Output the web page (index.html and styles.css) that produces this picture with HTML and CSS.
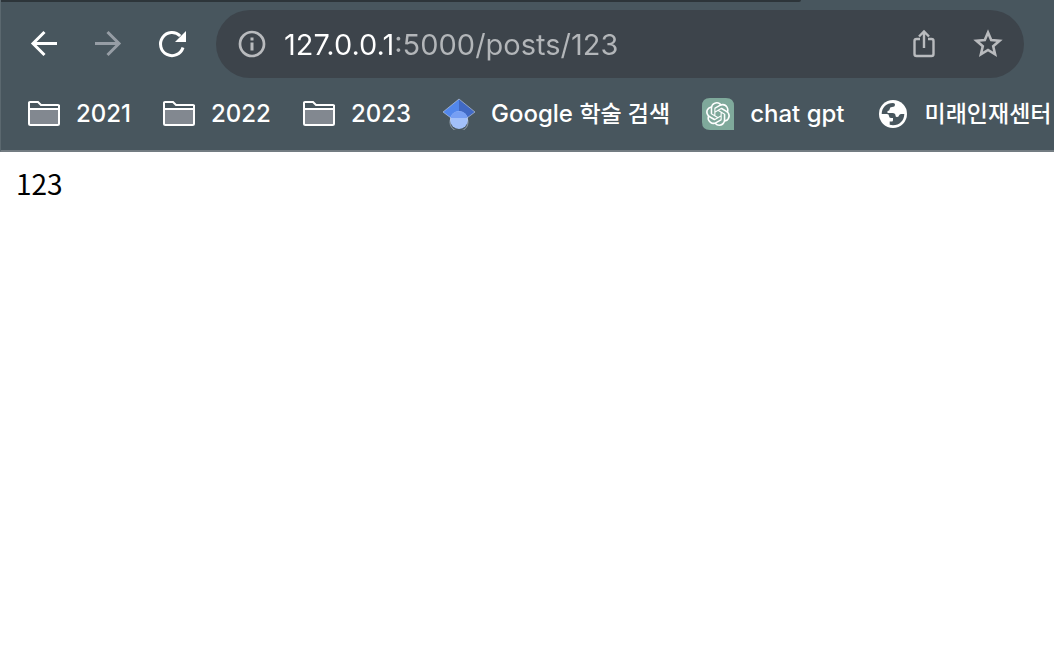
FILE: index.html
```
<!DOCTYPE html>
<html lang="ko">
  <head>
    <meta charset="UTF-8" />
    <meta name="viewport" content="width=device-width, initial-scale=1.0" />
    <title>127.0.0.1:5000/posts/123</title>
    <link rel="stylesheet" href="styles.css">
  </head>
  <body>
    <header class="browser">
      <div class="tab-strip"></div>
      <div class="toolbar">
        <button type="button" class="nav-btn" aria-label="Back">
          <svg width="32" height="32" viewBox="0 0 32 32" fill="none" stroke="#fff" stroke-width="3">
            <path d="M29 15.500H5M16.500 4L5 15.500L16.500 27" />
          </svg>
        </button>
        <button type="button" class="nav-btn" aria-label="Forward" disabled>
          <svg width="32" height="32" viewBox="0 0 32 32" fill="none" stroke="#969da5" stroke-width="3">
            <path d="M3 15.500H27M15.500 4L27 15.500L15.500 27" />
          </svg>
        </button>
        <button type="button" class="nav-btn" aria-label="Reload">
          <svg width="32" height="32" viewBox="0 0 32 32">
            <path d="M27 19.500A11.500 11.500 0 1 1 24.200 8" fill="none" stroke="#fff" stroke-width="3" />
            <path d="M30 3V14H19Z" fill="#fff" />
          </svg>
        </button>
        <form class="address-bar">
          <button type="button" class="address-btn" aria-label="Site information">
            <svg width="28" height="28" viewBox="0 0 28 28">
              <circle cx="14" cy="14" r="12" fill="none" stroke="#b9bbbe" stroke-width="2.700" />
              <path d="M12.500 7.500h3v3h-3zM12.500 12.500h3v8h-3z" fill="#b9bbbe" />
            </svg>
          </button>
          <input type="text" class="address" aria-label="Address" value="127.0.0.1:5000/posts/123" spellcheck="false" />
          <button type="button" class="address-btn share" aria-label="Share">
            <svg width="32" height="32" viewBox="0 0 32 32" fill="none" stroke="#b9bbbe" stroke-width="2.400">
              <path d="M12 11H8.500Q6.500 11 6.500 13V26Q6.500 28 8.500 28H23.500Q25.500 28 25.500 26V13Q25.500 11 23.500 11H20" />
              <path d="M16 20V4M11 8.500L16 3.500L21 8.500" />
            </svg>
          </button>
          <button type="button" class="address-btn" aria-label="Bookmark this page">
            <svg width="32" height="32" viewBox="0 0 32 32" fill="none" stroke="#b9bbbe" stroke-width="2.600">
              <path d="M16 4.500L19.200 12.100L27.500 12.800L21.200 18.200L23.100 26.300L16 22L8.900 26.300L10.800 18.200L4.500 12.800L12.800 12.100Z" />
            </svg>
          </button>
        </form>
      </div>
      <nav class="bookmarks">
        <a class="bookmark" href="#">
          <svg width="32" height="32" viewBox="0 0 32 32" stroke="#fff" stroke-width="2">
            <path d="M1 8V25.500Q1 27 2.500 27H29.500Q31 27 31 25.500V8Z" fill="#828890" />
            <path d="M1 11V4.500Q1 4 2 4H10L13 7H30Q31 7 31 8V11Z" fill="#48565e" />
          </svg>
          2021
        </a>
        <a class="bookmark" href="#">
          <svg width="32" height="32" viewBox="0 0 32 32" stroke="#fff" stroke-width="2">
            <path d="M1 8V25.500Q1 27 2.500 27H29.500Q31 27 31 25.500V8Z" fill="#828890" />
            <path d="M1 11V4.500Q1 4 2 4H10L13 7H30Q31 7 31 8V11Z" fill="#48565e" />
          </svg>
          2022
        </a>
        <a class="bookmark" href="#">
          <svg width="32" height="32" viewBox="0 0 32 32" stroke="#fff" stroke-width="2">
            <path d="M1 8V25.500Q1 27 2.500 27H29.500Q31 27 31 25.500V8Z" fill="#828890" />
            <path d="M1 11V4.500Q1 4 2 4H10L13 7H30Q31 7 31 8V11Z" fill="#48565e" />
          </svg>
          2023
        </a>
        <a class="bookmark" href="#">
          <svg width="32" height="32" viewBox="0 0 32 32">
            <path d="M16 1L0 14L8 20L16 14Z" fill="#5287ec" />
            <path d="M16 1L32 14L24 20L16 14Z" fill="#4169c4" />
            <circle cx="16" cy="22" r="9" fill="#a2c0fa" />
            <path d="M7.300 20A9 9 0 0 1 24.700 20Z" fill="#779ff3" />
            <path d="M8 20L0 14L16 1L32 14L24 20A9 9 0 1 1 8 20" fill="none" stroke="#c8d2e2" stroke-width="0.600" />
          </svg>
          <span>Google <span class="hangul">학술 검색</span></span>
        </a>
        <a class="bookmark" href="#">
          <svg width="32" height="32" viewBox="0 0 32 32">
            <path d="M8 0H24Q32 0 32 8V32H8Q0 32 0 24V8Q0 0 8 0Z" fill="#7fa99b" />
            <g transform="translate(4 4)" fill="#fff">
              <path d="M22.282 9.821a5.985 5.985 0 0 0-.516-4.910 6.046 6.046 0 0 0-6.510-2.900A6.065 6.065 0 0 0 4.981 4.182a5.985 5.985 0 0 0-3.998 2.900 6.046 6.046 0 0 0 .743 7.097 5.980 5.980 0 0 0 .511 4.911 6.051 6.051 0 0 0 6.515 2.900A5.985 5.985 0 0 0 13.260 24a6.056 6.056 0 0 0 5.772-4.206 5.990 5.990 0 0 0 3.998-2.900 6.056 6.056 0 0 0-.747-7.073zM13.260 22.430a4.476 4.476 0 0 1-2.876-1.041l.141-.081 4.779-2.758a.795.795 0 0 0 .393-.681v-6.737l2.020 1.169a.071.071 0 0 1 .038.052v5.583a4.504 4.504 0 0 1-4.495 4.494zM3.600 18.304a4.470 4.470 0 0 1-.535-3.014l.142.085 4.783 2.759a.771.771 0 0 0 .780 0l5.843-3.369v2.332a.080.080 0 0 1-.033.062L9.740 19.950a4.500 4.500 0 0 1-6.140-1.646zM2.341 7.896a4.485 4.485 0 0 1 2.365-1.973V11.600a.766.766 0 0 0 .388.677l5.814 3.354-2.020 1.169a.076.076 0 0 1-.071 0l-4.830-2.787A4.504 4.504 0 0 1 2.341 7.872zm16.596 3.856l-5.833-3.388L15.119 7.200a.076.076 0 0 1 .071 0l4.830 2.791a4.494 4.494 0 0 1-.676 8.105v-5.678a.790.790 0 0 0-.407-.667zm2.011-3.023l-.142-.085-4.774-2.782a.776.776 0 0 0-.785 0L9.409 9.230V6.897a.066.066 0 0 1 .028-.061l4.830-2.787a4.499 4.499 0 0 1 6.680 4.660zM8.307 12.863l-2.020-1.164a.080.080 0 0 1-.038-.057V6.075a4.499 4.499 0 0 1 7.376-3.454l-.142.081-4.778 2.758a.795.795 0 0 0-.393.682zm1.097-2.365l2.602-1.500 2.607 1.500v2.999l-2.597 1.500-2.607-1.500z" />
            </g>
          </svg>
          chat gpt
        </a>
        <a class="bookmark" href="#">
          <svg width="32" height="32" viewBox="0 0 32 32">
            <circle cx="16" cy="16" r="14" fill="#fff" />
            <path d="M4.700 16C4.700 9.500 9.500 5 16 5Q18 5 18 6.500Q18 9 15 9Q12.700 9 12.700 11Q12.700 13 10.500 13V15H15.500Q18.500 15 18.500 17.500Q18.500 19 20 19Q21.500 19 22 17.500Q22.500 16 24 16H27.300C27.300 22.500 22.500 27.300 16 27.300L12.700 26.800V23.500H15Q16 23.500 16 22V20H14Q12 20 12 18Q12 16 10 16Z" fill="#48565e" />
          </svg>
          <span class="hangul">미래인재센터</span>
        </a>
      </nav>
    </header>
    <main class="page">123</main>
  </body>
</html>
```
FILE: styles.css
```
* {
  box-sizing: border-box;
}

body {
  margin: 0;
  background-color: #fff;
  overflow-x: hidden;
}

.browser {
  background-color: #48565e;
  border-left: 1px solid #5b686f;
  border-bottom: 2px solid #737c82;
  font-family: Inter, "Noto Sans CJK KR", sans-serif;
}

.tab-strip {
  width: 76%;
  height: 2px;
  background-color: #2d353a;
  border-bottom-right-radius: 4px;
}

.toolbar {
  display: flex;
  align-items: center;
  padding: 8px 30px 0 11px;
}

button {
  display: flex;
  align-items: center;
  justify-content: center;
  padding: 0;
  border: none;
  background: none;
}

.nav-btn {
  width: 64px;
  height: 64px;
}

.address-bar {
  display: flex;
  align-items: center;
  flex: 1;
  height: 68px;
  margin-left: 12px;
  padding: 0 20px;
  border-radius: 34px;
  background-color: #3d444b;
}

.address-btn {
  width: 32px;
  height: 32px;
}

.share {
  margin-right: 32px;
}

/* host is white, the port and path are dimmed */
.address {
  flex: 1;
  min-width: 0;
  height: 48px;
  margin: 0 16px;
  padding: 0;
  border: none;
  outline: none;
  background: linear-gradient(to right, #fff 110px, #b3b6b9 110px);
  background-clip: text;
  -webkit-background-clip: text;
  color: transparent;
  font-family: inherit;
  font-size: 29px;
}

.bookmarks {
  display: flex;
  align-items: center;
  gap: 32px;
  height: 72px;
  padding-left: 27px;
  overflow: hidden;
}

.bookmark {
  display: flex;
  align-items: center;
  flex-shrink: 0;
  gap: 16px;
  color: #fff;
  font-size: 24px;
  font-weight: 500;
  line-height: 32px;
  text-decoration: none;
  white-space: nowrap;
}

.hangul {
  font-size: 23px;
}

.page {
  padding: 12px 16px;
  font-family: "Noto Sans CJK KR", sans-serif;
  font-size: 28px;
  line-height: 38px;
  color: #000;
}
```
